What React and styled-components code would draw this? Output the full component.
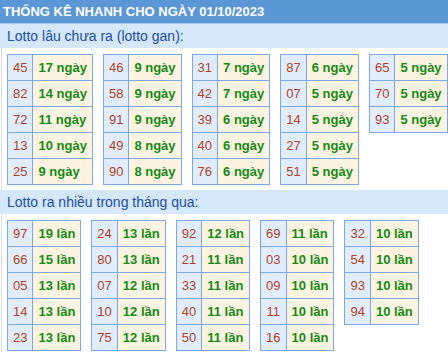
import styled, { createGlobalStyle } from "styled-components";

const GlobalStyle = createGlobalStyle`
  body {
    margin: 0;
    background: #ffffff;
    font-family: "Liberation Sans", Arial, sans-serif;
  }
`;

const Page = styled.div`
  width: 448px;
`;

const Header = styled.div`
  height: 23px;
  line-height: 23px;
  padding-left: 3px;
  background: #5b97d7;
  border-bottom: 1px solid #a9c8ee;
  color: #ffffff;
  font-size: 13px;
  font-weight: bold;
  white-space: nowrap;
`;

const Band = styled.div`
  height: 24px;
  line-height: 24px;
  padding-left: 7px;
  background: #d4e7fb;
  color: #1d4ea3;
  font-size: 14px;
`;

const Blocks = styled.div`
  display: flex;
  align-items: flex-start;
  gap: 10px;
  margin-left: 1px;
  padding: 6px 0 5px 5px;
  border-left: 1px solid #cdddf0;
`;

const Block = styled.div`
  display: grid;
  grid-template-columns: auto auto;
  border-top: 1px solid #7ba8ec;
  border-left: 1px solid #7ba8ec;
`;

const Cell = styled.div`
  box-sizing: border-box;
  height: 26px;
  line-height: 25px;
  padding: 0 5px;
  font-size: 13px;
  white-space: nowrap;
  border-right: 1px solid #7ba8ec;
  border-bottom: 1px solid #7ba8ec;
  background: ${(p) => (p.$num ? "#e1edfd" : "#fdf3e1")};
  color: ${(p) => (p.$num ? "#b3421f" : "#168a16")};
  font-weight: ${(p) => (p.$num ? "normal" : "bold")};
  text-align: ${(p) => (p.$num ? "center" : "left")};
`;

const gan = [
  [["45", 17], ["82", 14], ["72", 11], ["13", 10], ["25", 9]],
  [["46", 9], ["58", 9], ["91", 9], ["49", 8], ["90", 8]],
  [["31", 7], ["42", 7], ["39", 6], ["40", 6], ["76", 6]],
  [["87", 6], ["07", 5], ["14", 5], ["27", 5], ["51", 5]],
  [["65", 5], ["70", 5], ["93", 5]],
];

const nhieu = [
  [["97", 19], ["66", 15], ["05", 13], ["14", 13], ["23", 13]],
  [["24", 13], ["80", 13], ["07", 12], ["10", 12], ["75", 12]],
  [["92", 12], ["21", 11], ["33", 11], ["40", 11], ["50", 11]],
  [["69", 11], ["03", 10], ["09", 10], ["11", 10], ["16", 10]],
  [["32", 10], ["54", 10], ["93", 10], ["94", 10]],
];

function Section({ title, data, unit }) {
  return (
    <>
      <Band>{title}</Band>
      <Blocks>
        {data.map((rows, i) => (
          <Block key={i}>
            {rows.map(([num, count]) => [
              <Cell $num key={num + "n"}>
                {num}
              </Cell>,
              <Cell key={num + "v"}>
                {count} {unit}
              </Cell>,
            ])}
          </Block>
        ))}
      </Blocks>
    </>
  );
}

export default function App() {
  return (
    <Page>
      <GlobalStyle />
      <Header>THỐNG KÊ NHANH CHO NGÀY 01/10/2023</Header>
      <Section title="Lotto lâu chưa ra (lotto gan):" data={gan} unit="ngày" />
      <Section title="Lotto ra nhiều trong tháng qua:" data={nhieu} unit="lần" />
    </Page>
  );
}
